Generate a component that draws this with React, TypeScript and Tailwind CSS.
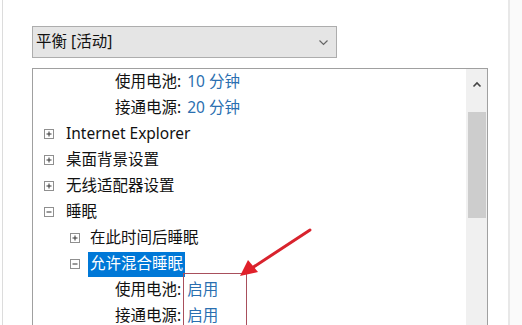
import React from "react";

const font = { fontFamily: '"Noto Sans", "Noto Sans CJK SC", sans-serif' };

function Expander({ open }: { open: boolean }) {
  return (
    <svg width="10" height="10" viewBox="0 0 10 10" className="shrink-0">
      <rect x="0.5" y="0.5" width="9" height="9" fill="white" stroke="#8f8f8f" />
      <line x1="2.5" y1="5" x2="7.5" y2="5" stroke="#333" strokeWidth="1" />
      {!open && <line x1="5" y1="2.5" x2="5" y2="7.5" stroke="#333" strokeWidth="1" />}
    </svg>
  );
}

function ValueRow({ label, value }: { label: string; value: string }) {
  return (
    <div className="h-[26px] flex items-center pl-[82px]">
      <span className="text-[#111]">{label}</span>
      <span className="text-[#2a6fb0] ml-[6px]">{value}</span>
    </div>
  );
}

function NodeRow({ label, open, level, selected }: { label: string; open: boolean; level: 1 | 2; selected?: boolean }) {
  return (
    <div className={`h-[26px] flex items-center ${level === 1 ? "pl-[11px]" : "pl-[37px]"}`}>
      <Expander open={open} />
      {selected ? (
        <span className="ml-[8px] bg-[#0078d7] text-white px-[2px] h-[25px] flex items-center">{label}</span>
      ) : (
        <span className={`${level === 1 ? "ml-[12px]" : "ml-[10px]"} text-[#111]`}>{label}</span>
      )}
    </div>
  );
}

export default function App() {
  return (
    <div className="relative w-[522px] h-[325px] overflow-hidden bg-white flex text-[15.5px] leading-none" style={font}>
      <div className="w-[2px] shrink-0" />
      <div className="w-[508px] shrink-0 border-l border-[#dcdcdc] border-r-2 border-r-[#e8e8e8] pt-[26px] pl-[29px]">
        <div className="w-[305px] h-[32px] bg-[#e5e5e5] border border-[#adadad] flex items-center justify-between pl-[3px] pr-[7px]">
          <span className="text-[#111]">平衡 [活动]</span>
          <svg width="11" height="7" viewBox="0 0 11 7">
            <path d="M1.5 1.5 L5.5 5.5 L9.5 1.5" fill="none" stroke="#666" strokeWidth="1.2" />
          </svg>
        </div>
        <div className="mt-[10px] w-[456px] h-[300px] border border-[#a0a0a0] flex">
          <div className="flex-1 flex flex-col">
            <ValueRow label="使用电池:" value="10 分钟" />
            <ValueRow label="接通电源:" value="20 分钟" />
            <NodeRow label="Internet Explorer" open={false} level={1} />
            <NodeRow label="桌面背景设置" open={false} level={1} />
            <NodeRow label="无线适配器设置" open={false} level={1} />
            <NodeRow label="睡眠" open={true} level={1} />
            <NodeRow label="在此时间后睡眠" open={false} level={2} />
            <NodeRow label="允许混合睡眠" open={true} level={2} selected />
            <ValueRow label="使用电池:" value="启用" />
            <ValueRow label="接通电源:" value="启用" />
          </div>
          <div className="w-[21px] bg-[#f0f0f0] flex flex-col items-center">
            <div className="h-[30px] flex items-center justify-center">
              <svg width="10" height="7" viewBox="0 0 10 7">
                <path d="M1.5 5.5 L5 2 L8.5 5.5" fill="none" stroke="#444" strokeWidth="1.6" />
              </svg>
            </div>
            <div className="mt-[13px] w-[18px] h-[106px] bg-[#cdcdcd]" />
          </div>
        </div>
      </div>
      <div className="flex-1 bg-[#fafafa]" />
      <div className="absolute left-[183px] top-[273px] w-[64px] h-[60px] border border-[#a84f5c]" />
      <svg className="absolute left-0 top-0" width="522" height="325" viewBox="0 0 522 325">
        <line x1="310" y1="230" x2="252" y2="268" stroke="#d8232d" strokeWidth="3" strokeLinecap="round" />
        <polygon points="240,276 248,260 258,272" fill="#e0202a" />
      </svg>
    </div>
  );
}
